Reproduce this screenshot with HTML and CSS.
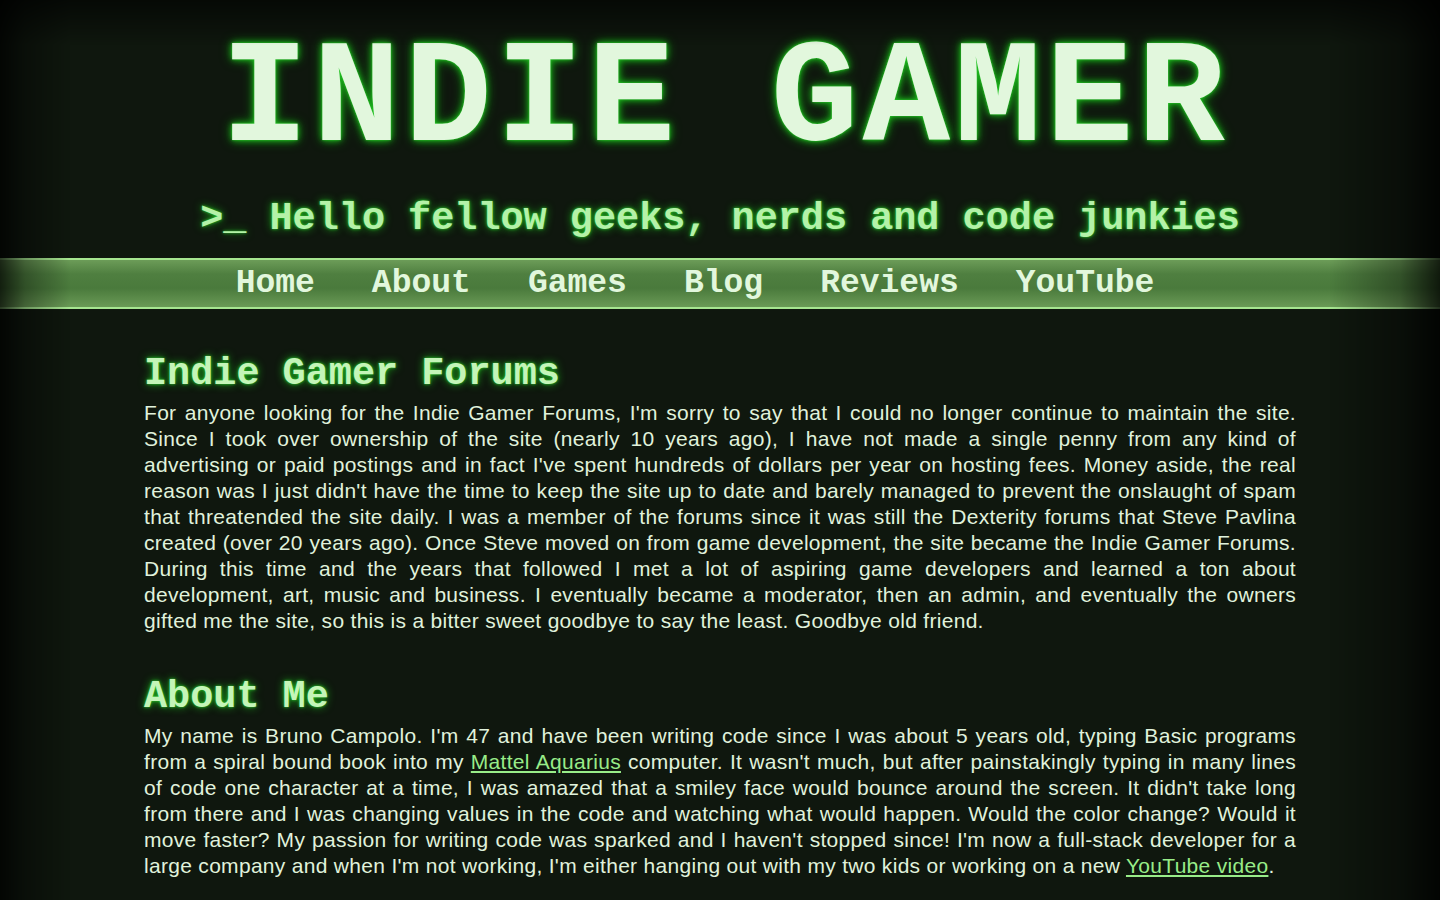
FILE: index.html
```html
<!DOCTYPE html>
<html lang="en">
<head>
<meta charset="utf-8">
<title>Indie Gamer</title>
<link rel="stylesheet" href="styles.css">
</head>
<body>
<header class="site-header">
  <h1 class="site-title">INDIE GAMER</h1>
  <p class="tagline">&gt;_ Hello fellow geeks, nerds and code junkies</p>
</header>
<nav class="main-nav">
  <ul class="nav-list">
    <li><a href="#">Home</a></li>
    <li><a href="#">About</a></li>
    <li><a href="#">Games</a></li>
    <li><a href="#">Blog</a></li>
    <li><a href="#">Reviews</a></li>
    <li><a href="#">YouTube</a></li>
  </ul>
</nav>
<main class="content">
  <section class="post">
    <h2 class="post-title">Indie Gamer Forums</h2>
    <p class="post-text">For anyone looking for the Indie Gamer Forums, I'm sorry to say that I could no longer continue to maintain the site. Since I took over ownership of the site (nearly 10 years ago), I have not made a single penny from any kind of advertising or paid postings and in fact I've spent hundreds of dollars per year on hosting fees. Money aside, the real reason was I just didn't have the time to keep the site up to date and barely managed to prevent the onslaught of spam that threatended the site daily. I was a member of the forums since it was still the Dexterity forums that Steve Pavlina created (over 20 years ago). Once Steve moved on from game development, the site became the Indie Gamer Forums. During this time and the years that followed I met a lot of aspiring game developers and learned a ton about development, art, music and business. I eventually became a moderator, then an admin, and eventually the owners gifted me the site, so this is a bitter sweet goodbye to say the least. Goodbye old friend.</p>
  </section>
  <section class="post">
    <h2 class="post-title">About Me</h2>
    <p class="post-text">My name is Bruno Campolo. I'm 47 and have been writing code since I was about 5 years old, typing Basic programs from a spiral bound book into my <a href="#">Mattel Aquarius</a> computer. It wasn't much, but after painstakingly typing in many lines of code one character at a time, I was amazed that a smiley face would bounce around the screen. It didn't take long from there and I was changing values in the code and watching what would happen. Would the color change? Would it move faster? My passion for writing code was sparked and I haven't stopped since! I'm now a full-stack developer for a large company and when I'm not working, I'm either hanging out with my two kids or working on a new <a href="#">YouTube video</a>.</p>
  </section>
</main>
</body>
</html>
```

FILE: styles.css
```css
html, body {
  margin: 0;
  padding: 0;
}

body {
  background: #0f170e;
  color: #e0f2dc;
  font-family: "Liberation Sans", Arial, sans-serif;
  min-height: 100vh;
}

body::after {
  content: "";
  position: fixed;
  inset: 0;
  pointer-events: none;
  background:
    linear-gradient(to right, rgba(0, 0, 0, 0.75) 0, rgba(0, 0, 0, 0.35) 25px, rgba(0, 0, 0, 0) 70px, rgba(0, 0, 0, 0) calc(100% - 110px), rgba(0, 0, 0, 0.35) calc(100% - 40px), rgba(0, 0, 0, 0.8) 100%),
    linear-gradient(to bottom, rgba(0, 0, 0, 0.6) 0, rgba(0, 0, 0, 0) 45px);
}

.site-header {
  text-align: center;
  padding-top: 38px;
}

.site-title {
  margin: 0;
  font-family: "Liberation Mono", "Courier New", monospace;
  font-weight: bold;
  font-size: 146px;
  line-height: 126px;
  letter-spacing: 4px;
  text-indent: 10px;
  color: #e2f7dd;
  text-shadow: 0 0 2px #2fd12f, 0 0 6px #1fb81f, 0 0 12px #119911;
}

.tagline {
  margin: 33px 0 0;
  font-family: "Liberation Mono", "Courier New", monospace;
  font-weight: bold;
  font-size: 38.5px;
  line-height: 44px;
  color: #b4f2a8;
  text-shadow: 0 0 3px #2fd12f, 0 0 8px #1aa81a;
}

.main-nav {
  margin-top: 17px;
  border-top: 2px solid #a6e690;
  border-bottom: 2px solid #a6e690;
  background: linear-gradient(to bottom, #6c9c58 0%, #4f7f40 30%, #4a7a3c 60%, #6a9a56 100%);
}

.nav-list {
  list-style: none;
  margin: 0;
  padding: 0;
  display: flex;
  justify-content: center;
  height: 47px;
  align-items: center;
}

.nav-list li {
  margin-right: 57px;
}

.nav-list li:last-child {
  margin-right: 50px;
}

.nav-list a {
  font-family: "Liberation Mono", "Courier New", monospace;
  font-weight: bold;
  font-size: 33px;
  color: #e2f7dd;
  text-decoration: none;
}

.content {
  max-width: 1152px;
  margin: 0 auto;
  padding-top: 43px;
}

.post {
  margin-bottom: 41px;
}

.post-title {
  margin: 0 0 4px;
  font-family: "Liberation Mono", "Courier New", monospace;
  font-weight: bold;
  font-size: 38.5px;
  line-height: 44px;
  color: #c4f5b8;
  text-shadow: 0 0 3px #2fd12f, 0 0 8px #1aa81a;
}

.post-text {
  margin: 0;
  font-size: 21px;
  line-height: 26px;
  letter-spacing: 0.3px;
  text-align: justify;
}

.post-text a {
  color: #98ec88;
  text-decoration: underline;
}
```
